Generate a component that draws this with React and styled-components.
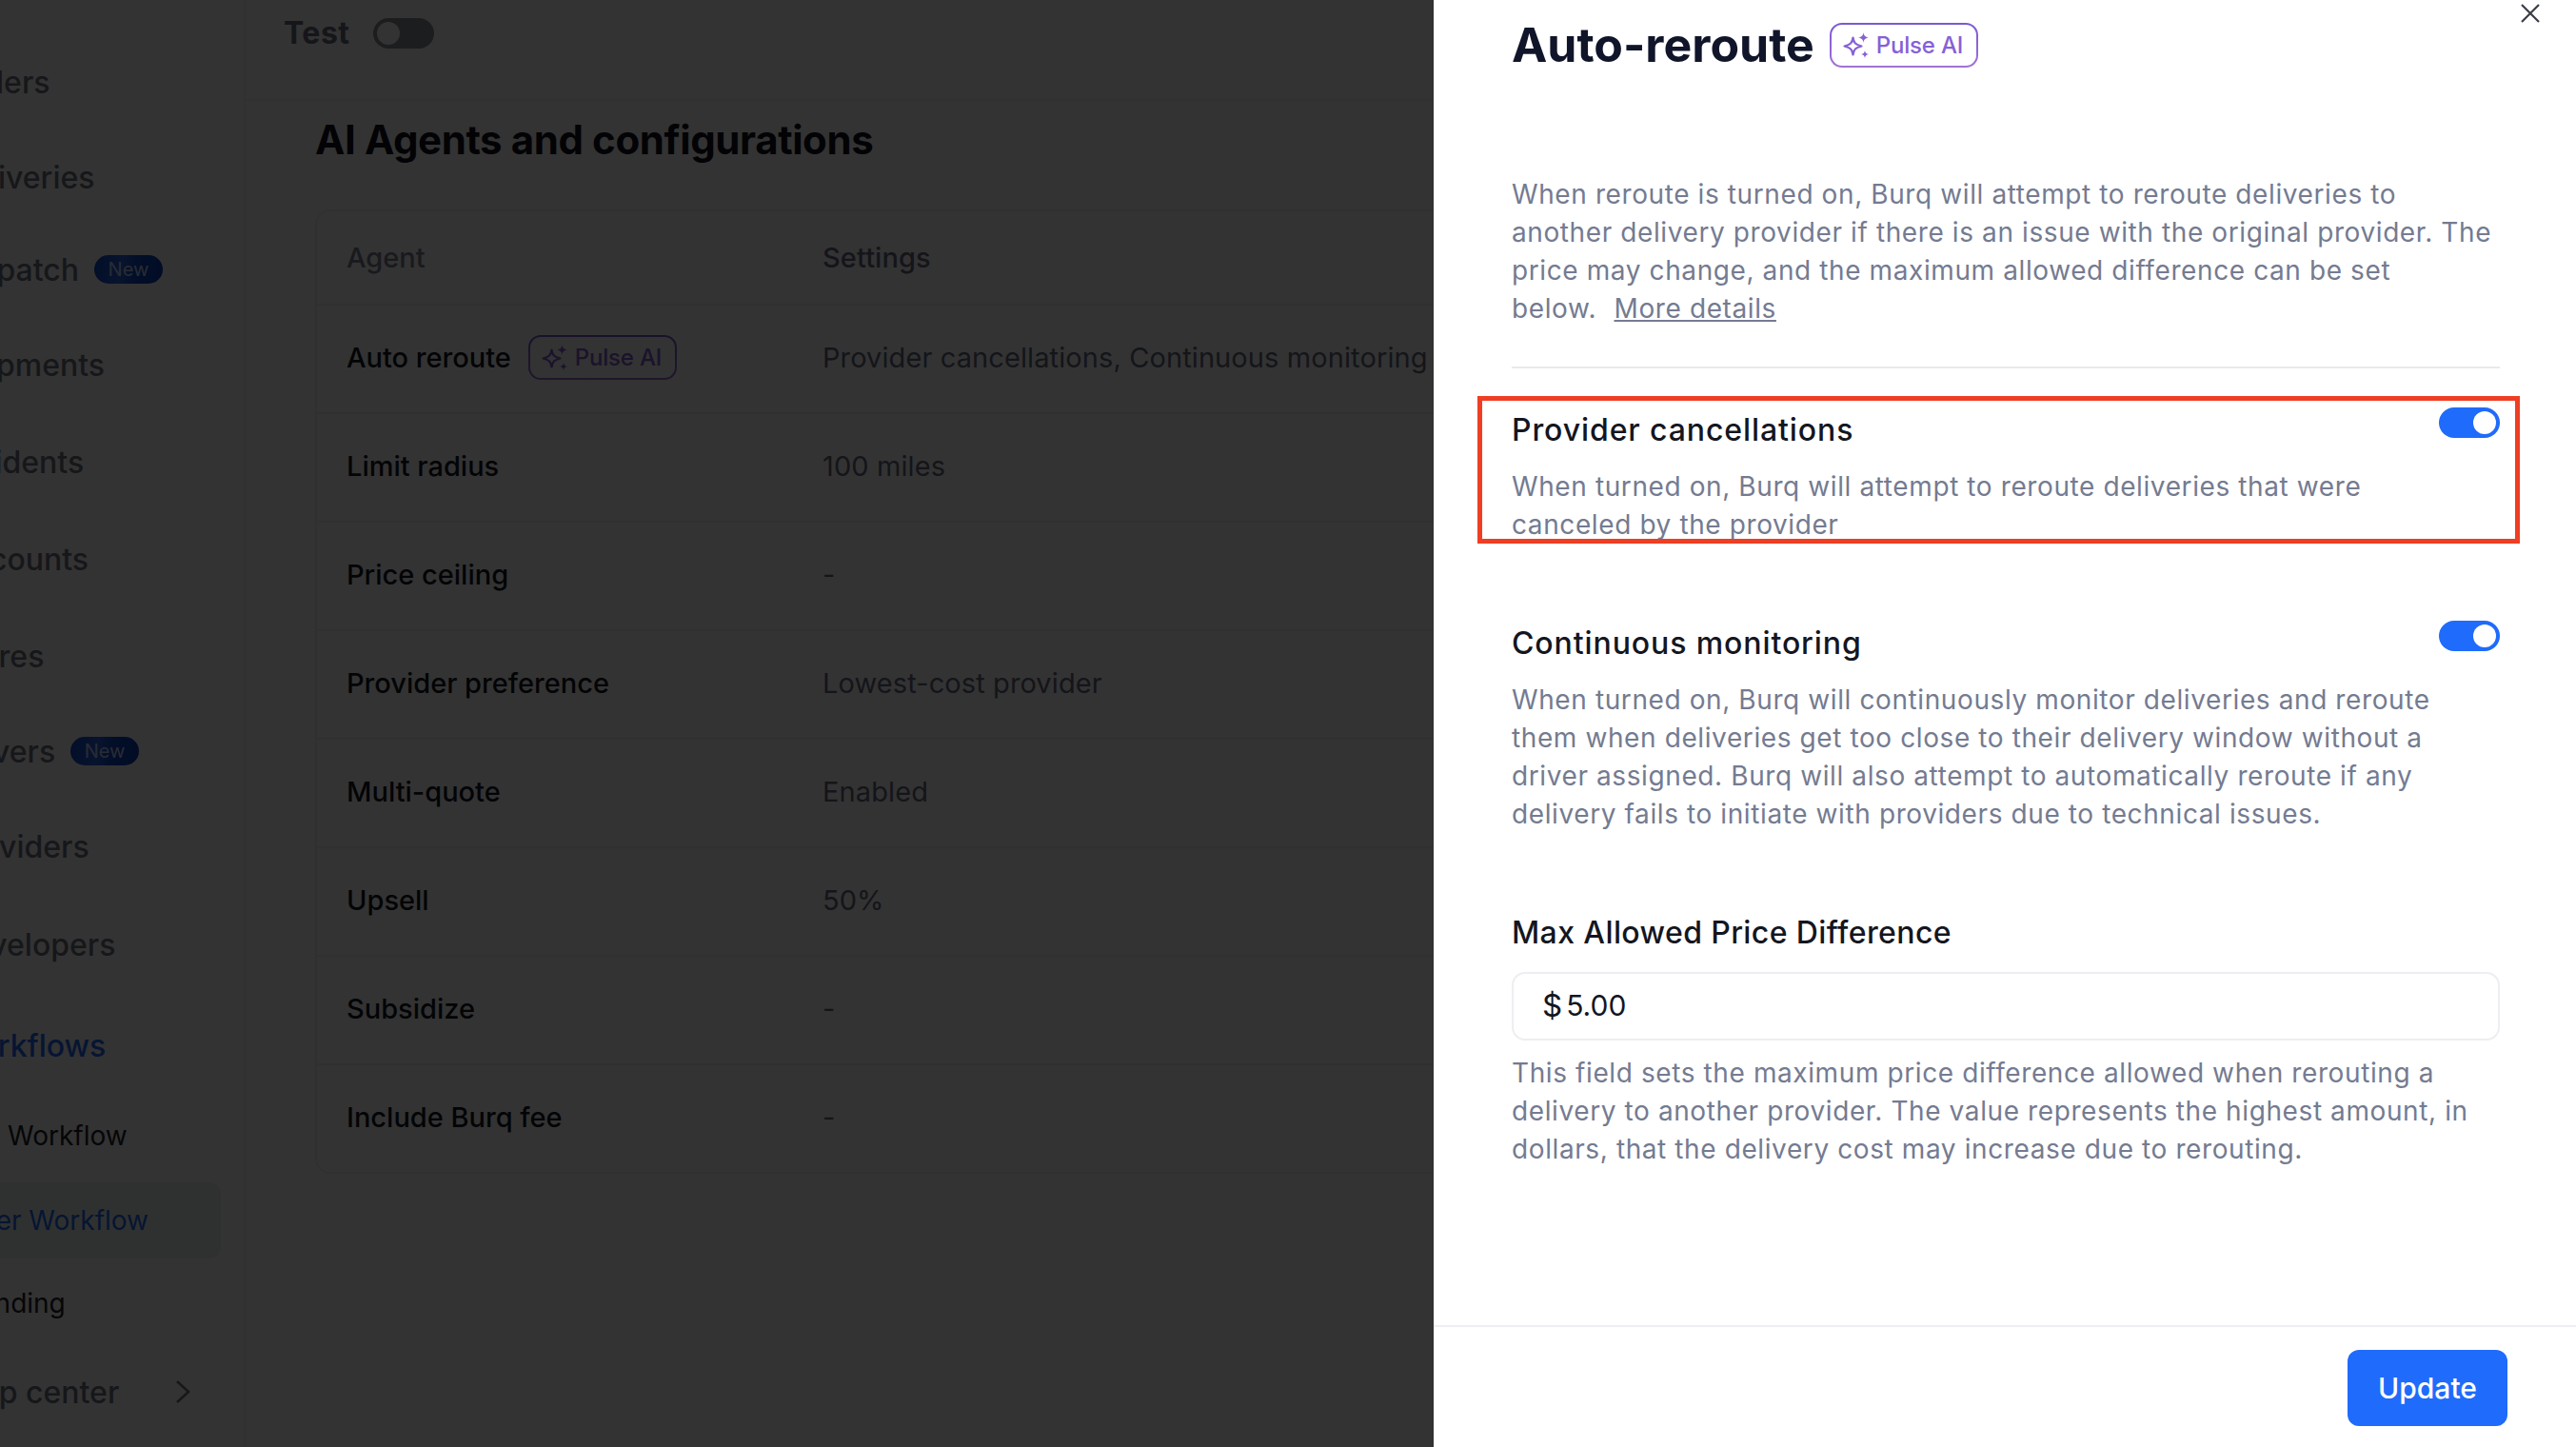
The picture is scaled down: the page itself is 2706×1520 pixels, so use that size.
import styled, { createGlobalStyle } from 'styled-components';

const GlobalStyle = createGlobalStyle`
  html, body {
    margin: 0;
    padding: 0;
    height: 100%;
    background: #fff;
    font-family: Inter, "Noto Sans", sans-serif;
  }
  * { box-sizing: border-box; }
`;

const Shell = styled.div`
  position: relative;
  display: flex;
  width: 100%;
  height: 100vh;
  overflow: hidden;
`;

/* ---------- sidebar, slid partly off screen ---------- */

const Sidebar = styled.aside`
  flex: 0 0 258px;
  padding-top: 36px;
  border-right: 2px solid #f3f4f6;
  overflow: hidden;
`;

const NavRow = styled.div`
  display: flex;
  align-items: center;
  gap: 16px;
  height: ${({ $h }) => $h}px;
  margin-left: -52px;
  font-size: 32px;
  font-weight: 500;
  white-space: nowrap;
  color: ${({ $active }) => ($active ? '#1f6bfb' : '#6f7480')};
`;

const SubRow = styled.div`
  display: flex;
  align-items: center;
  height: ${({ $h }) => $h}px;
  width: 232px;
  margin-top: ${({ $active }) => ($active ? 6 : 0)}px;
  font-size: 28px;
  white-space: nowrap;
  overflow: hidden;
  border-radius: 0 12px 12px 0;
  color: ${({ $active }) => ($active ? '#1f6bfb' : '#20222a')};
  background: ${({ $active }) => ($active ? '#ebf5f0' : 'transparent')};
`;

const SubLabel = styled.span`
  margin-left: ${({ $shift }) => $shift}px;
`;

const NewBadge = styled.span`
  display: inline-flex;
  align-items: center;
  justify-content: center;
  width: 72px;
  height: 30px;
  border-radius: 15px;
  font-size: 20px;
  font-weight: 400;
  color: #c8d8ff;
  background: linear-gradient(100deg, #0f46c8 0%, #2a63e6 40%, #0f46c8 60%, #0a3cb8 100%);
`;

const HelpRow = styled(NavRow)`
  justify-content: space-between;
  width: 252px;
`;

/* ---------- main area ---------- */

const Main = styled.main`
  flex: 1;
  min-width: 0;
`;

const TopBar = styled.div`
  display: flex;
  align-items: flex-start;
  gap: 24px;
  height: 106px;
  padding: 13px 0 0 40px;
  border-bottom: 2px solid #f3f4f6;
`;

const EnvLabel = styled.span`
  font-size: 32px;
  line-height: 44px;
  font-weight: 700;
  letter-spacing: 0.5px;
  color: #6b7080;
`;

const EnvToggle = styled.div`
  display: flex;
  align-items: center;
  width: 64px;
  height: 32px;
  margin-top: 6px;
  padding: 4px;
  border-radius: 16px;
  background: #8b909c;
`;

const EnvKnob = styled.div`
  width: 24px;
  height: 24px;
  border-radius: 50%;
  background: #fff;
`;

const Content = styled.div`
  padding: 11px 0 0 73px;
`;

const PageTitle = styled.h1`
  margin: 0 0 43px;
  font-size: 42px;
  line-height: 60px;
  font-weight: 700;
  letter-spacing: -0.4px;
  color: #0f1322;
`;

const Table = styled.div`
  border: 2px solid #f0f1f3;
  border-right: 0;
  border-radius: 16px 0 0 16px;
`;

const TableRow = styled.div`
  display: grid;
  grid-template-columns: 500px 1fr;
  align-items: center;
  height: ${({ $head }) => ($head ? 97 : 114)}px;
  padding-left: 31px;
  padding-bottom: ${({ $head }) => ($head ? 0 : 3)}px;
  border-top: ${({ $head }) => ($head ? '0' : '2px solid #f0f1f3')};
  font-size: 29px;
  white-space: nowrap;
`;

const AgentCell = styled.div`
  display: flex;
  align-items: center;
  gap: 18px;
  font-weight: 500;
  color: ${({ $head }) => ($head ? '#7b8194' : '#111522')};
`;

const SettingCell = styled.div`
  font-size: 29px;
  letter-spacing: 0.1px;
  font-weight: ${({ $head }) => ($head ? 500 : 400)};
  color: #666c80;
`;

const Badge = styled.span`
  display: inline-flex;
  align-items: center;
  gap: 8px;
  width: 156px;
  height: 47px;
  padding-left: 12px;
  border: 2px solid transparent;
  border-radius: 13px;
  background:
    linear-gradient(#fff, #fff) padding-box,
    linear-gradient(180deg, #7a58d2, #a272d4) border-box;
  font-size: 24px;
  font-weight: 500;
  letter-spacing: -0.2px;
  color: #8661d6;
`;

/* ---------- overlay and drawer ---------- */

const Backdrop = styled.div`
  position: absolute;
  inset: 0;
  background: rgba(0, 0, 0, 0.8);
`;

const Drawer = styled.section`
  position: absolute;
  top: 0;
  right: 0;
  bottom: 0;
  display: flex;
  flex-direction: column;
  width: 1200px;
  background: #fff;
`;

const CloseButton = styled.button`
  position: absolute;
  top: 4px;
  right: 37px;
  display: flex;
  padding: 0;
  border: 0;
  background: none;
  color: #3a3d45;
`;

const DrawerBody = styled.div`
  flex: 1;
  padding: 0 80px 0 82px;
`;

const TitleRow = styled.header`
  display: flex;
  align-items: center;
  gap: 16px;
  height: 94px;
  margin-bottom: 90px;
`;

const DrawerTitle = styled.h2`
  margin: 0;
  font-size: 50px;
  font-weight: 700;
  color: #11152a;
`;

const Body = styled.p`
  margin: 0;
  font-size: 28px;
  line-height: 40px;
  letter-spacing: 0.6px;
  color: #747b91;
`;

const MoreLink = styled.a`
  margin-left: 10px;
  color: #747b91;
  text-decoration: underline;
`;

const Divider = styled.hr`
  height: 2px;
  margin: 41px 0;
  border: 0;
  background: #e6eaee;
`;

const Setting = styled.div`
  position: relative;
  margin-bottom: 81px;
`;

const SettingHead = styled.div`
  display: flex;
  justify-content: space-between;
  align-items: flex-start;
  margin-bottom: 15px;
`;

const SettingTitle = styled.h3`
  margin: 0;
  font-size: 32px;
  line-height: 48px;
  font-weight: 500;
  letter-spacing: 0.9px;
  color: #14161f;
`;

const Toggle = styled.div`
  display: flex;
  justify-content: flex-end;
  align-items: center;
  width: 64px;
  height: 32px;
  padding: 4px;
  border-radius: 16px;
  background: #1f6bfb;
`;

const Knob = styled.div`
  width: 24px;
  height: 24px;
  border-radius: 50%;
  background: #fff;
`;

/* annotation drawn on top of the first setting */
const Highlight = styled.div`
  position: absolute;
  top: -12px;
  left: -36px;
  right: -21px;
  bottom: 0;
  border: 5px solid #ef3e23;
  pointer-events: none;
`;

const PriceLabel = styled(SettingTitle)`
  margin-bottom: 17px;
  letter-spacing: 0.4px;
`;

const PriceField = styled.div`
  display: flex;
  align-items: center;
  gap: 4px;
  height: 72px;
  margin-bottom: 14px;
  padding: 0 0 3px 30px;
  border: 2px solid #eeeef2;
  border-radius: 14px;
  font-size: 30px;
  color: #14161f;
`;

const Currency = styled.span`
  font-size: 33px;
`;

const DrawerFooter = styled.footer`
  display: flex;
  justify-content: flex-end;
  height: 128px;
  padding: 24px 72px 0 0;
  border-top: 2px solid #eeeef3;
`;

const UpdateButton = styled.button`
  width: 168px;
  height: 80px;
  border: 0;
  border-radius: 12px;
  background: #1f6bfb;
  font-family: inherit;
  font-size: 30px;
  font-weight: 500;
  color: #fff;
`;

const Sparkles = () => (
  <svg width="27" height="27" viewBox="0 0 27 27" fill="none">
    <path
      d="M10.5 5.5C11.3 11 13 12.9 19.5 14.5C13 16.1 11.3 18 10.5 23.5C9.7 18 8 16.1 1.5 14.5C8 12.9 9.7 11 10.5 5.5Z"
      stroke="currentColor"
      strokeWidth="2.2"
      strokeLinejoin="round"
    />
    <path d="M21.5 0C22 3.4 23 4.8 27 5.5C23 6.2 22 7.6 21.5 11C21 7.6 20 6.2 16 5.5C20 4.8 21 3.4 21.5 0Z" fill="currentColor" />
    <path d="M23 19C23.4 21.4 24.2 22.4 27 23C24.2 23.6 23.4 24.6 23 27C22.6 24.6 21.8 23.6 19 23C21.8 22.4 22.6 21.4 23 19Z" fill="currentColor" />
  </svg>
);

const PulseBadge = () => (
  <Badge>
    <Sparkles />
    Pulse AI
  </Badge>
);

const rows = [
  ['Limit radius', '100 miles'],
  ['Price ceiling', '-'],
  ['Provider preference', 'Lowest-cost provider'],
  ['Multi-quote', 'Enabled'],
  ['Upsell', '50%'],
  ['Subsidize', '-'],
  ['Include Burq fee', '-'],
];

export default function App() {
  return (
    <Shell>
      <GlobalStyle />
      <Sidebar>
        <NavRow $h={100}>Orders</NavRow>
        <NavRow $h={100}>Deliveries</NavRow>
        <NavRow $h={94}>
          Dispatch <NewBadge>New</NewBadge>
        </NavRow>
        <NavRow $h={106}>Shipments</NavRow>
        <NavRow $h={98}>Incidents</NavRow>
        <NavRow $h={106}>Accounts</NavRow>
        <NavRow $h={98}>Stores</NavRow>
        <NavRow $h={102}>
          Drivers <NewBadge>New</NewBadge>
        </NavRow>
        <NavRow $h={98}>Providers</NavRow>
        <NavRow $h={108}>Developers</NavRow>
        <NavRow $h={104} $active>Workflows</NavRow>
        <SubRow $h={86}>
          <SubLabel $shift={8}>Workflow</SubLabel>
        </SubRow>
        <SubRow $h={80} $active>
          <SubLabel $shift={-53}>Order Workflow</SubLabel>
        </SubRow>
        <SubRow $h={94}>
          <SubLabel $shift={-50}>Branding</SubLabel>
        </SubRow>
        <HelpRow $h={92}>
          Help center
          <svg width="16" height="24" viewBox="0 0 16 24" fill="none">
            <path d="M2 1l12 11L2 23" stroke="#6f7480" strokeWidth="2.5" />
          </svg>
        </HelpRow>
      </Sidebar>

      <Main>
        <TopBar>
          <EnvLabel>Test</EnvLabel>
          <EnvToggle>
            <EnvKnob />
          </EnvToggle>
        </TopBar>
        <Content>
          <PageTitle>AI Agents and configurations</PageTitle>
          <Table>
            <TableRow $head>
              <AgentCell $head>Agent</AgentCell>
              <SettingCell $head>Settings</SettingCell>
            </TableRow>
            <TableRow>
              <AgentCell>
                Auto reroute
                <PulseBadge />
              </AgentCell>
              <SettingCell>Provider cancellations, Continuous monitoring</SettingCell>
            </TableRow>
            {rows.map(([agent, value]) => (
              <TableRow key={agent}>
                <AgentCell>{agent}</AgentCell>
                <SettingCell>{value}</SettingCell>
              </TableRow>
            ))}
          </Table>
        </Content>
      </Main>

      <Backdrop />

      <Drawer>
        <CloseButton aria-label="Close">
          <svg width="22" height="20" viewBox="0 0 22 20" fill="none">
            <path d="M2 1l18 18M20 1L2 19" stroke="currentColor" strokeWidth="2.2" />
          </svg>
        </CloseButton>
        <DrawerBody>
          <TitleRow>
            <DrawerTitle>Auto-reroute</DrawerTitle>
            <PulseBadge />
          </TitleRow>
          <Body>
            When reroute is turned on, Burq will attempt to reroute deliveries to another delivery
            provider if there is an issue with the original provider. The price may change, and the
            maximum allowed difference can be set
            <br />
            below. <MoreLink>More details</MoreLink>
          </Body>
          <Divider />
          <Setting>
            <SettingHead>
              <SettingTitle>Provider cancellations</SettingTitle>
              <Toggle>
                <Knob />
              </Toggle>
            </SettingHead>
            <Body>
              When turned on, Burq will attempt to reroute deliveries that were
              <br />
              canceled by the provider
            </Body>
            <Highlight />
          </Setting>
          <Setting>
            <SettingHead>
              <SettingTitle>Continuous monitoring</SettingTitle>
              <Toggle>
                <Knob />
              </Toggle>
            </SettingHead>
            <Body>
              When turned on, Burq will continuously monitor deliveries and reroute them when
              deliveries get too close to their delivery window without a driver assigned. Burq will
              also attempt to automatically reroute if any delivery fails to initiate with providers
              due to technical issues.
            </Body>
          </Setting>
          <PriceLabel>Max Allowed Price Difference</PriceLabel>
          <PriceField>
            <Currency>$</Currency>
            <span>5.00</span>
          </PriceField>
          <Body>
            This field sets the maximum price difference allowed when rerouting a delivery to
            another provider. The value represents the highest amount, in dollars, that the delivery
            cost may increase due to rerouting.
          </Body>
        </DrawerBody>
        <DrawerFooter>
          <UpdateButton>Update</UpdateButton>
        </DrawerFooter>
      </Drawer>
    </Shell>
  );
}
